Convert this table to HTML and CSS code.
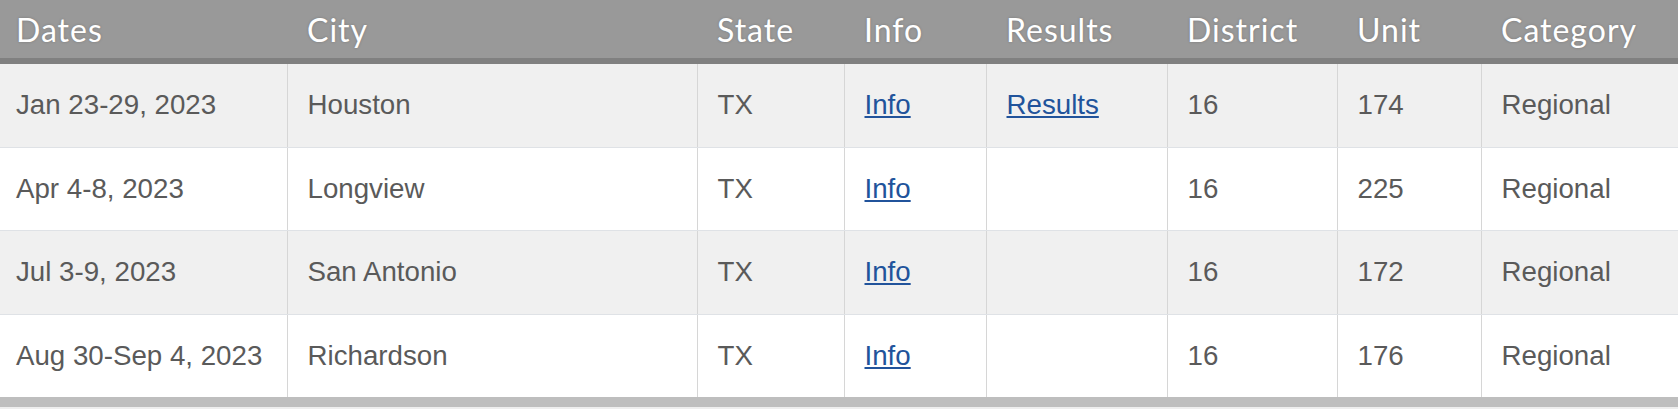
FILE: index.html
```html
<!DOCTYPE html>
<html lang="en">
<head>
<meta charset="utf-8">
<title>Tournaments</title>
<link rel="stylesheet" href="styles.css">
</head>
<body>
<table class="events">
  <colgroup>
    <col class="c-dates"><col class="c-city"><col class="c-state"><col class="c-info">
    <col class="c-results"><col class="c-district"><col class="c-unit"><col class="c-cat">
  </colgroup>
  <thead>
    <tr>
      <th>Dates</th><th>City</th><th>State</th><th>Info</th><th>Results</th><th>District</th><th>Unit</th><th>Category</th>
    </tr>
  </thead>
  <tbody>
    <tr>
      <td>Jan 23-29, 2023</td><td>Houston</td><td>TX</td><td><a href="#">Info</a></td><td><a href="#">Results</a></td><td>16</td><td>174</td><td>Regional</td>
    </tr>
    <tr>
      <td>Apr 4-8, 2023</td><td>Longview</td><td>TX</td><td><a href="#">Info</a></td><td></td><td>16</td><td>225</td><td>Regional</td>
    </tr>
    <tr>
      <td>Jul 3-9, 2023</td><td>San Antonio</td><td>TX</td><td><a href="#">Info</a></td><td></td><td>16</td><td>172</td><td>Regional</td>
    </tr>
    <tr>
      <td>Aug 30-Sep 4, 2023</td><td>Richardson</td><td>TX</td><td><a href="#">Info</a></td><td></td><td>16</td><td>176</td><td>Regional</td>
    </tr>
  </tbody>
</table>
<div class="foot-bar"></div>
</body>
</html>
```
FILE: styles.css
```css
html, body {
  margin: 0;
  padding: 0;
  background: #eeeeee;
}

.events {
  width: 1678px;
  border-collapse: collapse;
  table-layout: fixed;
  background: #ffffff;
}

.c-dates { width: 287px; }
.c-city { width: 410px; }
.c-state { width: 147px; }
.c-info { width: 142px; }
.c-results { width: 181px; }
.c-district { width: 170px; }
.c-unit { width: 144px; }
.c-cat { width: 197px; }

.events th {
  height: 58px;
  padding: 0 0 0 20px;
  background: #999999;
  border-bottom: 6px solid #808080;
  color: #ffffff;
  font-family: Lato, "Open Sans", sans-serif;
  font-weight: 400;
  font-size: 32px;
  letter-spacing: 1px;
  text-align: left;
  text-shadow: 0 0 3px rgba(0, 0, 0, 0.2);
  white-space: nowrap;
}

.events th:first-child,
.events td:first-child {
  padding-left: 16px;
}

.events td {
  height: 82.5px;
  padding: 0 0 0 20px;
  border-left: 1.5px solid #d6d6d6;
  border-bottom: 1.5px solid #dfe2e6;
  color: #5a5a5a;
  font-family: "Liberation Sans", Arial, sans-serif;
  font-size: 27.7px;
  white-space: nowrap;
  vertical-align: middle;
}

.events td:first-child {
  border-left: none;
}

.events tbody tr:nth-child(odd) td {
  background: #f0f0f0;
}

.events tbody tr:last-child td {
  border-bottom: none;
}

.events a {
  color: #21539b;
  text-decoration: underline;
}

.foot-bar {
  height: 10px;
  background: #bebebe;
}
```
